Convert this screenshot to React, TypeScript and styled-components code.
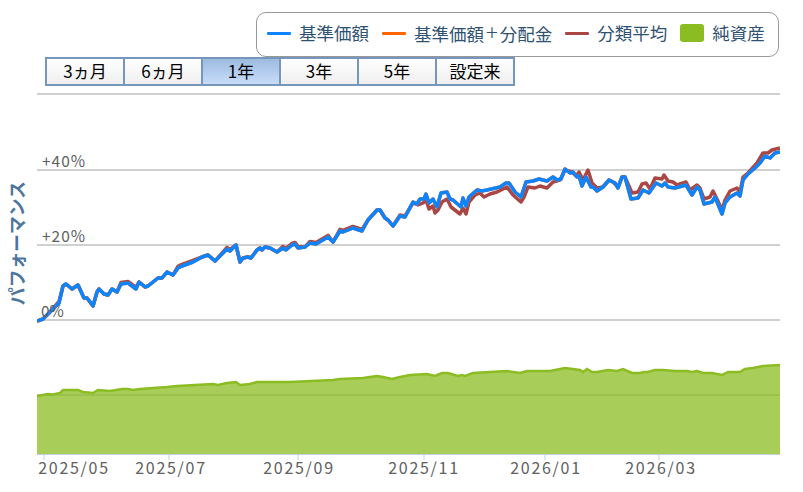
import styled, { createGlobalStyle } from 'styled-components';

type Point = [number, number];

const GlobalStyle = createGlobalStyle`
  html, body {
    margin: 0;
    padding: 0;
    background: #fff;
  }
  body {
    font-family: 'Noto Sans CJK JP', 'Noto Sans', sans-serif;
  }
`;

const Page = styled.div`
  width: 803px;
  height: 492px;
  overflow: hidden;
  display: flex;
  flex-direction: column;
`;

const LegendRow = styled.div`
  display: flex;
  justify-content: flex-end;
  padding: 12px 24px 0 0;
`;

const Legend = styled.ul`
  box-sizing: border-box;
  width: 523px;
  height: 45px;
  margin: 0;
  padding: 0 0 3px 10px;
  list-style: none;
  display: flex;
  align-items: center;
  border: 1.5px solid #999;
  border-radius: 10px;
`;

const LegendItem = styled.li`
  display: flex;
  align-items: center;
  gap: 8px;
  margin-right: 13px;
  font-size: 17.5px;
  line-height: 24px;
  color: #2f5273;
`;

const Plus = styled.span`
  padding: 0 2px;
  font-size: 22px;
  font-weight: 300;
  line-height: 1;
`;

const LineSymbol = styled.span<{ $color: string }>`
  width: 24px;
  height: 3px;
  border-radius: 1px;
  background: ${(p) => p.$color};
`;

const SwatchSymbol = styled.span<{ $color: string }>`
  width: 24px;
  height: 18px;
  border-radius: 3px;
  background: ${(p) => p.$color};
`;

const RangeTabs = styled.div`
  display: flex;
  align-self: flex-start;
  margin-left: 45px;
  border: 2px solid #7696bb;
`;

const RangeTab = styled.button<{ $active?: boolean }>`
  box-sizing: border-box;
  width: 78px;
  height: 25px;
  padding: 0 0 2px;
  border: 0;
  border-left: 2px solid #7696bb;
  font-family: inherit;
  font-size: 17px;
  line-height: 23px;
  color: #000;
  background: ${(p) =>
    p.$active
      ? 'linear-gradient(#9dbbe0, #c8dcf9)'
      : 'linear-gradient(#ffffff, #efefef)'};

  &:first-child {
    border-left: 0;
    width: 76px;
  }
`;

const ChartRow = styled.div`
  display: flex;
  margin-top: 2px;
`;

const AxisTitle = styled.div`
  box-sizing: border-box;
  width: 37px;
  height: 404px;
  padding: 93px 0 0 7px;
`;

const AxisTitleText = styled.span`
  display: block;
  writing-mode: vertical-rl;
  text-orientation: sideways;
  transform: rotate(180deg);
  font-size: 17.8px;
  line-height: 19px;
  font-weight: 700;
  color: #4d759e;
  white-space: nowrap;
`;

const Chart = styled.svg`
  display: block;
  flex: none;
`;

const YLabel = styled.text<{ $tight?: boolean }>`
  font-size: 15.5px;
  letter-spacing: ${(p) => (p.$tight ? 0 : 1)}px;
  fill: #606060;
`;

const XLabel = styled.text`
  font-size: 16px;
  letter-spacing: 1.7px;
  fill: #606060;
  text-anchor: middle;
`;

const fund: Point[] = [
  [37, 321], [43, 319], [50, 312], [59, 303], [63, 286], [66, 284], [72, 289], [78, 285], [84, 298], [87, 298],
  [93, 306], [97, 292], [99, 289], [104, 294], [108, 295], [112, 289], [117, 292], [121, 284], [128, 283], [136, 289],
  [139, 282], [145, 287], [148, 286], [158, 278], [162, 278], [167, 272], [173, 275], [178, 268], [182, 266], [193, 262],
  [202, 257], [208, 255], [215, 261], [227, 249], [230, 251], [236, 245], [240, 262], [243, 258], [248, 257], [251, 258],
  [257, 250], [260, 248], [262, 250], [265, 247], [270, 248], [277, 252], [283, 248], [286, 250], [292, 245], [295, 244],
  [298, 248], [305, 247], [310, 243], [316, 244], [328, 237], [333, 242], [340, 231], [343, 232], [353, 228], [362, 231],
  [368, 220], [377, 210], [380, 210], [385, 218], [388, 220], [393, 226], [400, 216], [405, 217], [413, 202], [417, 204],
  [420, 199], [424, 199], [426, 194], [429, 203], [433, 199], [437, 207], [441, 193], [447, 192], [450, 199], [453, 200],
  [461, 207], [463, 198], [466, 206], [469, 197], [477, 190], [482, 191], [487, 190], [500, 187], [506, 183], [509, 183],
  [515, 192], [521, 197], [526, 182], [533, 181], [539, 179], [547, 181], [553, 177], [557, 180], [561, 179], [565, 169],
  [570, 173], [573, 172], [577, 177], [579, 176], [582, 186], [586, 177], [591, 187], [593, 187], [597, 191], [603, 187],
  [609, 180], [615, 183], [618, 188], [622, 177], [625, 177], [631, 199], [638, 198], [643, 190], [649, 193], [656, 183],
  [662, 186], [665, 183], [668, 187], [675, 188], [686, 185], [692, 195], [697, 187], [700, 190], [704, 204], [712, 202],
  [715, 197], [722, 214], [725, 203], [730, 197], [737, 193], [740, 196], [743, 180], [748, 174], [755, 168], [760, 163],
  [765, 156], [770, 158], [775, 153], [780, 152],
];

const categoryTail: Point[] = [
  [400, 215], [405, 216], [413, 203], [418, 205], [423, 203], [426, 200], [429, 209], [433, 206], [435, 213], [438, 210],
  [442, 202], [447, 199], [451, 207], [460, 214], [463, 208], [466, 214], [469, 202], [475, 195], [480, 193], [484, 197],
  [490, 194], [497, 192], [507, 187], [513, 195], [521, 202], [524, 197], [528, 187], [535, 188], [540, 186], [547, 188],
  [553, 182], [560, 180], [565, 170], [572, 172], [576, 176], [579, 172], [583, 180], [588, 170], [592, 183], [597, 188],
  [603, 187], [609, 180], [613, 182], [618, 187], [622, 177], [625, 177], [632, 193], [638, 192], [642, 184], [646, 183],
  [650, 189], [655, 178], [662, 179], [664, 175], [668, 181], [673, 182], [677, 185], [686, 182], [690, 190], [697, 185],
  [700, 188], [704, 199], [710, 197], [713, 191], [717, 199], [722, 210], [725, 200], [730, 191], [737, 188], [740, 192],
  [743, 177], [748, 173], [757, 163], [763, 153], [768, 153], [772, 150], [780, 148],
];

// stretches before x=400 where the category average peeks out above the fund
const peeks = [[52, 60], [120, 137], [177, 200], [225, 232], [280, 300], [310, 330], [340, 367]];
const isPeek = (x: number) => peeks.some(([a, b]) => x >= a && x <= b);

const category: Point[] = [
  ...fund.filter(([x]) => x < 400).map(([x, y]): Point => [x, isPeek(x) ? y - 1.6 : y]),
  ...categoryTail,
];

const assets: Point[] = [
  [37, 396], [48, 394], [53, 394.5], [60, 393], [63, 390], [78, 390], [83, 392], [93, 393], [98, 390], [110, 391],
  [122, 389], [128, 389], [133, 390], [140, 389], [167, 387], [177, 386], [213, 384], [218, 385], [227, 383], [236, 382],
  [240, 385], [250, 384], [257, 382], [277, 382], [290, 382], [333, 380], [340, 379], [363, 378], [377, 376], [383, 377],
  [392, 379], [400, 377], [410, 375], [427, 374], [435, 376], [442, 373], [448, 373], [458, 376], [462, 375], [465, 376],
  [473, 373], [507, 371], [520, 373], [527, 371], [550, 371], [565, 368], [580, 370], [583, 372], [587, 369], [592, 372],
  [597, 372], [608, 370], [617, 371], [623, 369], [632, 373], [640, 373], [644, 372], [648, 372], [655, 370], [663, 370],
  [675, 371], [687, 371], [692, 372], [697, 371], [703, 373], [712, 373], [722, 375], [728, 372], [740, 372], [745, 369],
  [753, 368], [763, 366], [780, 365],
];

const gridLines = [94, 170, 245, 320, 395];
const yLabels = [
  { text: '+40%', x: 42, y: 167 },
  { text: '+20%', x: 42, y: 242 },
  { text: '0%', x: 41, y: 317 },
];
const xTicks = [
  { text: '2025/05', tick: 44, x: 74 },
  { text: '2025/07', tick: 169, x: 171 },
  { text: '2025/09', tick: 298, x: 299 },
  { text: '2025/11', tick: 424, x: 424 },
  { text: '2026/01', tick: 545, x: 546 },
  { text: '2026/03', tick: 659, x: 661 },
];

const ranges = ['3ヵ月', '6ヵ月', '1年', '3年', '5年', '設定来'];

const toPath = (points: Point[]) =>
  points.map(([x, y], i) => `${i === 0 ? 'M' : 'L'}${x} ${y}`).join(' ');

const PerformanceChart = () => (
  <Chart width={766} height={404} viewBox="37 88 766 404">
    <defs>
      <clipPath id="plot">
        <rect x={37} y={88} width={743} height={366} />
      </clipPath>
    </defs>

    {gridLines.map((y) => (
      <line key={y} x1={37} x2={780} y1={y} y2={y} stroke="#c0c0c0" strokeWidth={1.5} />
    ))}

    <path
      d={`${toPath(assets)} L780 454 L37 454 Z`}
      fill="rgba(139, 188, 33, 0.75)"
    />
    <path d={toPath(assets)} fill="none" stroke="#8bbc21" strokeWidth={2.5} clipPath="url(#plot)" />

    <line x1={37} x2={780} y1={454.5} y2={454.5} stroke="#c0d0e0" strokeWidth={1} />
    {xTicks.map((t) => (
      <line key={t.text} x1={t.tick} x2={t.tick} y1={454} y2={460} stroke="#c0d0e0" strokeWidth={1} />
    ))}

    <g fill="none" strokeWidth={3.5} strokeLinejoin="round" clipPath="url(#plot)">
      <path d={toPath(category)} stroke="#aa4643" />
      <path d={toPath(fund)} stroke="#ff6600" />
      <path d={toPath(fund)} stroke="#0d84ff" />
    </g>

    {yLabels.map((l) => (
      <YLabel key={l.text} x={l.x} y={l.y} $tight={l.text === '0%'}>
        {l.text}
      </YLabel>
    ))}
    {xTicks.map((t) => (
      <XLabel key={t.text} x={t.x} y={474}>
        {t.text}
      </XLabel>
    ))}
  </Chart>
);

export default function App() {
  return (
    <Page>
      <GlobalStyle />
      <LegendRow>
        <Legend>
          <LegendItem>
            <LineSymbol $color="#0d84ff" />
            基準価額
          </LegendItem>
          <LegendItem>
            <LineSymbol $color="#ff6600" />
            <span>
              基準価額<Plus>+</Plus>分配金
            </span>
          </LegendItem>
          <LegendItem>
            <LineSymbol $color="#aa4643" />
            分類平均
          </LegendItem>
          <LegendItem>
            <SwatchSymbol $color="#8bbc21" />
            純資産
          </LegendItem>
        </Legend>
      </LegendRow>
      <RangeTabs>
        {ranges.map((r) => (
          <RangeTab key={r} $active={r === '1年'}>
            {r}
          </RangeTab>
        ))}
      </RangeTabs>
      <ChartRow>
        <AxisTitle>
          <AxisTitleText>パフォーマンス</AxisTitleText>
        </AxisTitle>
        <PerformanceChart />
      </ChartRow>
    </Page>
  );
}
